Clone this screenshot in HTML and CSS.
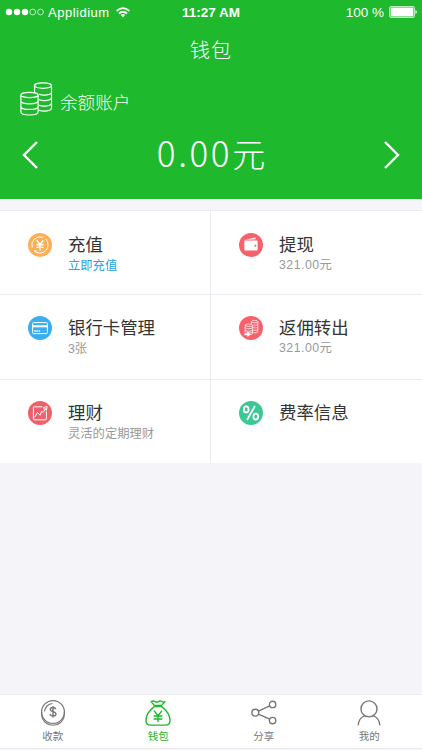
FILE: index.html
```html
<!DOCTYPE html>
<html lang="zh-CN">
<head>
  <meta charset="UTF-8">
  <meta name="viewport" content="width=device-width, initial-scale=1.0">
  <title>钱包</title>
  <link rel="stylesheet" href="styles.css">
</head>
<body>
  <div class="app">
    <header class="header">
      <div class="status">
        <div class="carrier">
          <svg width="39" height="8" viewBox="0 0 39 8">
            <g fill="#fff"><circle cx="4" cy="4" r="3.2"/><circle cx="12" cy="4" r="3.2"/><circle cx="20" cy="4" r="3.2"/></g>
            <g fill="none" stroke="#fff" stroke-width=".7"><circle cx="27.7" cy="4" r="2.9"/><circle cx="35.5" cy="4" r="2.9"/></g>
          </svg>
          <span class="name">Applidium</span>
          <svg width="14" height="11" viewBox="0 0 14 11" fill="none" stroke="#fff" stroke-width="1.7">
            <path d="M.6 4Q7-1.7 13.4 4M3 6.5Q7 3 11 6.5"/>
            <path d="M4.8 8Q7 6.2 9.2 8L7 10.4z" fill="#fff" stroke="none"/>
          </svg>
        </div>
        <span class="time">11:27 AM</span>
        <div class="battery">
          <span>100 %</span>
          <svg width="28" height="12" viewBox="0 0 28 12">
            <rect x=".5" y=".5" width="25" height="11" rx="1.5" fill="none" stroke="#fff" stroke-width=".7"/>
            <rect x="1.6" y="1.6" width="22.8" height="8.8" rx=".5" fill="#fff"/>
            <path d="M26.5 4q1.3.5 1.3 2t-1.3 2z" fill="#fff"/>
          </svg>
        </div>
      </div>
      <h1>钱包</h1>
      <div class="account">
        <svg width="33" height="34" viewBox="0 0 33 34" fill="none" stroke="#fff" stroke-width="1.2">
          <ellipse cx="23" cy="3.6" rx="8.5" ry="2.7"/>
          <path d="M14.5 3.6v6.600M31.500 3.600v22.400c0 3-8 4-12.500 2.300M31.500 10c0 3-8 4-12.500 2.300M31.500 15.500c0 3-8 4-12.500 2.300M31.500 21c0 3-8 4-12.500 2.300"/>
          <ellipse cx="9.5" cy="13" rx="8.6" ry="2.7"/>
          <path d="M.9 13v17c0 4 17.200 4 17.200 0V13M.9 18.800c0 4 17.200 4 17.200 0M.9 24.400c0 4 17.200 4 17.200 0"/>
        </svg>
        <span>余额账户</span>
      </div>
      <div class="balance">
        <svg width="17" height="28" viewBox="0 0 17 28" fill="none" stroke="#fff" stroke-width="2.4"><path d="M15 1L2 14l13 13"/></svg>
        <span class="amount">0.00<span class="unit">元</span></span>
        <svg width="17" height="28" viewBox="0 0 17 28" fill="none" stroke="#fff" stroke-width="2.4"><path d="M2 1l13 13L2 27"/></svg>
      </div>
    </header>

    <main class="grid">
      <a class="item">
        <svg class="icon" viewBox="0 0 24 24" fill="none" stroke="#fff" stroke-width="1">
          <circle cx="12" cy="12" r="12" fill="#fcaf56" stroke="none"/>
          <path d="M4.2 14.5A8.2 8.2 0 0 1 15 4.4M17.5 5.800A8.200 8.200 0 0 1 6 17.800M6 17.800l3 .2"/>
          <path d="M8.7 7.2l3.300 4.300 3.300-4.300M12 11.500v6M8.500 11.800h7M8.500 14.400h7" stroke-width="1.4"/>
        </svg>
        <div class="text"><h2>充值</h2><p class="link">立即充值</p></div>
      </a>
      <a class="item">
        <svg class="icon" viewBox="0 0 24 24">
          <circle cx="12" cy="12" r="12" fill="#f8616b"/>
          <path d="M5.4 6.900L16.200 4.500l.6 1.800z" fill="#fff"/>
          <path d="M5.3 7.6h12.5q.8 0 .8.8v8.4q0 .8-.8.8H6.2q-.9 0-.9-.9z" fill="#fff"/>
          <circle cx="16.4" cy="12.8" r="1" fill="#f8616b"/>
        </svg>
        <div class="text"><h2>提现</h2><p class="money">321.00元</p></div>
      </a>
      <a class="item">
        <svg class="icon" viewBox="0 0 24 24" fill="none" stroke="#fff">
          <circle cx="12" cy="12" r="12" fill="#3aaeef" stroke="none"/>
          <rect x="4.6" y="6.6" width="14.8" height="11" rx="1"/>
          <path d="M4.6 10.3h14.8" stroke-width="2"/>
          <path d="M6.2 15h6" stroke-width="1.6" stroke-dasharray="1.5 .7"/>
        </svg>
        <div class="text"><h2>银行卡管理</h2><p>3张</p></div>
      </a>
      <a class="item">
        <svg class="icon" viewBox="0 0 24 24" fill="none" stroke="#fff" stroke-width=".7">
          <circle cx="12" cy="12" r="12" fill="#f8616b" stroke="none"/>
          <ellipse cx="15.6" cy="5.6" rx="3.2" ry="1.2"/>
          <path d="M12.4 5.6v2.8M18.8 5.6v9.8c0 1.3-2 1.6-4.6 1.2M18.8 8c0 1.3-2 1.6-4.6 1.2M18.8 10.5c0 1.3-2 1.6-4.6 1.2M18.8 13c0 1.3-2 1.6-4.6 1.2"/>
          <ellipse cx="9.8" cy="9.2" rx="3.7" ry="1.2"/>
          <path d="M6.1 9.2v7.4M13.5 9.2v8c0 1.3-2 1.6-4 1.3M6.1 11.5c0 1.5 7.4 1.5 7.4 0M6.1 14c0 1.5 7.4 1.5 7.4 0M7.5 16.3c1.5.8 6 .7 6-.3"/>
          <path d="M5.500 17.200h3v-1.700l3.200 2.700-3.200 2.700v-1.700h-3z" fill="#fff" stroke="none"/>
        </svg>
        <div class="text"><h2>返佣转出</h2><p class="money">321.00元</p></div>
      </a>
      <a class="item">
        <svg class="icon" viewBox="0 0 24 24" fill="none" stroke="#fff" stroke-width="1">
          <circle cx="12" cy="12" r="12" fill="#ee616c" stroke="none"/>
          <path d="M14.5 5.8H6.4q-1 0-1 1v11q0 1 1 1h11q1 0 1-1V10.5"/>
          <path d="M6.5 16.5l3-5 2.5 2.8 1.8-4 1.3 1.2 2.5-4M15.2 7l3.8-1.8-.5 4z"/>
        </svg>
        <div class="text"><h2>理财</h2><p>灵活的定期理财</p></div>
      </a>
      <a class="item">
        <svg class="icon" viewBox="0 0 24 24" fill="none" stroke="#fff" stroke-width="1.8">
          <circle cx="12" cy="12" r="12" fill="#3cc894" stroke="none"/>
          <ellipse cx="7.2" cy="8.4" rx="2.4" ry="3"/>
          <ellipse cx="16.8" cy="15.6" rx="2.400" ry="3"/>
          <path d="M16 5L8 19" stroke-width="1.6"/>
        </svg>
        <div class="text"><h2>费率信息</h2></div>
      </a>
    </main>

    <nav class="tabbar">
      <a class="tab">
        <svg width="26" height="26" viewBox="0 0 26 26" fill="none" stroke="#777" stroke-width="1.2">
          <circle cx="13" cy="12" r="11.4"/>
          <path d="M1.600 12v2c1 15 21.800 15 22.800 0v-2M4.500 11.500a8.500 8.500 0 0 1 8-8"/>
          <path d="M15.800 9.200c-.6-2.300-5.500-2.200-5.500.3 0 2.800 5.600 1.600 5.600 4.500 0 2.700-5.400 2.700-5.800 0M13 6v11.600" stroke-width="1.400"/>
        </svg>
        <span>收款</span>
      </a>
      <a class="tab active">
        <svg width="26" height="26" viewBox="0 0 26 26" fill="none" stroke="#1eb92c" stroke-width="1.4" stroke-linejoin="round">
          <path d="M9.300 5.400L6.200 1.600q2-1.200 4 0t3 0q2-1.300 3.600-.1t3.200.1L16.600 5.400z"/>
          <path d="M9.300 6.600h7.400c4 3 8.300 8.400 8.300 13.900 0 3-1.600 4.600-4.500 4.600h-15C2.600 25.100 1 23.500 1 20.500 1 15 5.300 9.600 9.300 6.600z"/>
          <path d="M9 10.800l4 4.800 4-4.800M13 15.600v6.400M8.600 16h8.800M8.600 19h8.800"/>
        </svg>
        <span>钱包</span>
      </a>
      <a class="tab">
        <svg width="26" height="26" viewBox="0 0 26 26" fill="none" stroke="#777" stroke-width="1.400">
          <circle cx="4.300" cy="12.700" r="3.400"/><circle cx="21.600" cy="4.400" r="3.200"/><circle cx="21.600" cy="20.600" r="3.200"/>
          <path d="M7.400 11.200l11.300-5.400M7.400 14.200l11.300 5"/>
        </svg>
        <span>分享</span>
      </a>
      <a class="tab">
        <svg width="26" height="26" viewBox="0 0 26 26" fill="none" stroke="#777" stroke-width="1.400">
          <circle cx="13" cy="8.900" r="8"/>
          <path d="M2.200 25.300c.2-4.500 3-8.500 6.800-9.700M23.800 25.300c-.2-4.500-3-8.500-6.800-9.700"/>
        </svg>
        <span>我的</span>
      </a>
    </nav>
  </div>
</body>
</html>
```
FILE: styles.css
```css
* {
  box-sizing: border-box;
}
body {
  margin: 0;
  font-family: "Liberation Sans", "Noto Sans CJK SC", sans-serif;
  background-color: #f4f4f9;
  color: #333;
}
h1, h2, p {
  margin: 0;
  font-weight: normal;
}
svg {
  display: block;
  flex-shrink: 0;
}
.app {
  display: flex;
  flex-direction: column;
  height: 750px;
}
.header {
  height: 199px;
  background: #1eb92c;
  color: #fff;
}
.status {
  display: grid;
  grid-template-columns: 1fr auto 1fr;
  align-items: center;
  height: 24px;
  padding: 0 5px;
  font-size: 13px;
}
.carrier, .battery {
  display: flex;
  align-items: center;
}
.name {
  margin: 0 6px 0 4px;
  letter-spacing: 0.5px;
}
.time {
  font-size: 13.5px;
  font-weight: bold;
}
.battery {
  justify-content: flex-end;
  gap: 5px;
  font-size: 13.5px;
}
h1 {
  height: 52px;
  line-height: 54px;
  font-size: 20px;
  font-weight: 300;
  text-align: center;
  letter-spacing: 1px;
}
.account {
  display: flex;
  gap: 7px;
  height: 48px;
  padding: 6px 20px 0;
  font-family: "Noto Sans CJK SC", sans-serif;
  font-size: 17.6px;
  font-weight: 300;
  line-height: 40px;
}
.balance {
  display: flex;
  align-items: center;
  justify-content: space-between;
  height: 61px;
  padding: 0 22px;
}
.amount {
  margin-top: -5px;
  font-family: "Noto Sans CJK SC", sans-serif;
  font-size: 35px;
  font-weight: 300;
  line-height: 50px;
  letter-spacing: 2.6px;
}
.unit {
  font-size: 33px;
  letter-spacing: 0;
}
.grid {
  display: grid;
  grid-template-columns: 211px 211px;
  grid-template-rows: 84px 85px 84px;
  margin-top: 11px;
}
.item {
  display: flex;
  gap: 16px;
  padding: 21px 0 0 28px;
  background: #fff;
  border-top: 1px solid #ececf0;
}
.item:nth-child(-n+2) {
  padding-top: 22px;
}
.item:nth-child(odd) {
  border-right: 1px solid #ececf0;
}
.icon {
  width: 24px;
  height: 24px;
}
h2 {
  font-size: 17.4px;
  line-height: 25px;
}
.item p {
  font-size: 12.3px;
  line-height: 16px;
  color: #999;
}
.item .money {
  margin-top: -1px;
  letter-spacing: 0.5px;
}
.item .link {
  color: #2ca1e4;
}
.tabbar {
  display: grid;
  grid-template-columns: repeat(4, 105.5px);
  height: 55px;
  margin: auto 0 1px;
  background: #fff;
  border-top: 1px solid #ececf0;
  border-bottom: 1px solid #ececf0;
}
.tab {
  display: flex;
  flex-direction: column;
  align-items: center;
  gap: 2px;
  padding-top: 5px;
  font-size: 10.5px;
  line-height: 16px;
  color: #777;
}
.active {
  color: #1eb92c;
}
```
